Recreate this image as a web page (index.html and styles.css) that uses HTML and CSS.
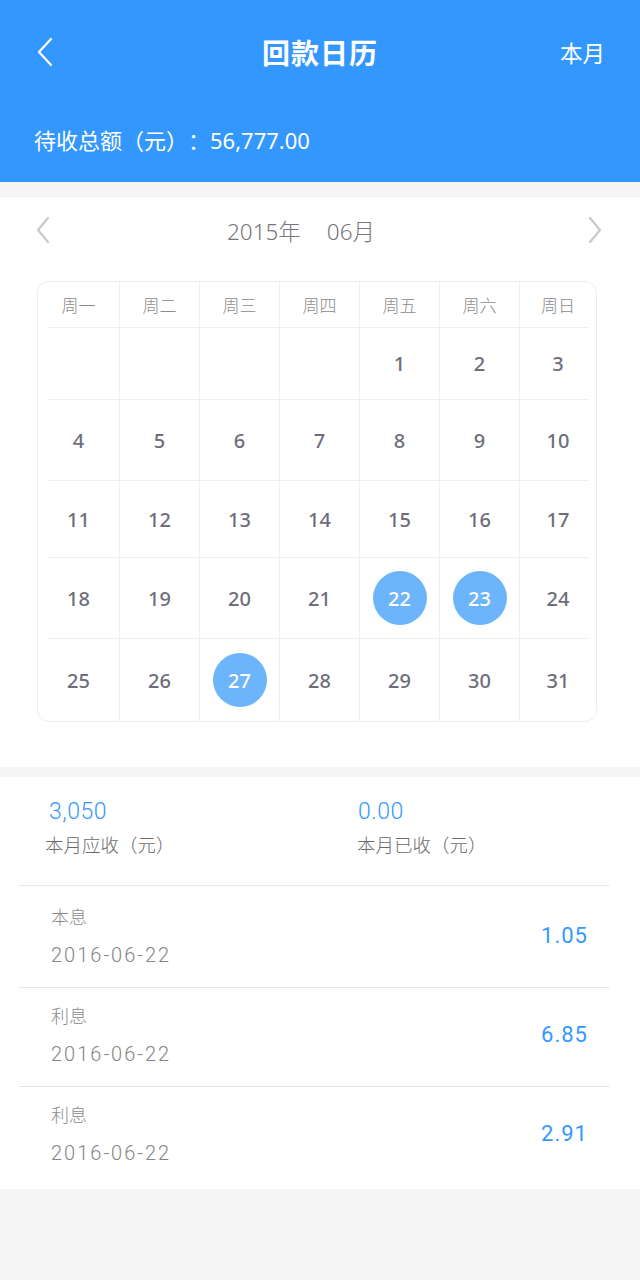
FILE: index.html
```html
<!DOCTYPE html>
<html lang="zh-CN">
<head>
<meta charset="utf-8">
<title>回款日历</title>
<link rel="stylesheet" href="styles.css">
</head>
<body>
<header class="header">
  <div class="topbar">
    <span class="back">
      <svg width="18" height="30" viewBox="0 0 18 30"><path d="M15 2 L3 15 L15 28" fill="none" stroke="#fff" stroke-width="2.2" stroke-linecap="round" stroke-linejoin="round"/></svg>
    </span>
    <h1 class="title">回款日历</h1>
    <span class="this-month">本月</span>
  </div>
  <div class="total">待收总额（元）：56,777.00</div>
</header>

<section class="calendar">
  <div class="month-nav">
    <svg class="arrow" width="18" height="30" viewBox="0 0 18 30"><path d="M14 3 L4 15 L14 27" fill="none" stroke="#c8c8c8" stroke-width="2.2" stroke-linecap="round" stroke-linejoin="round"/></svg>
    <div class="month-label"><span>2015年</span><span>06月</span></div>
    <svg class="arrow" width="18" height="30" viewBox="0 0 18 30"><path d="M4 3 L14 15 L4 27" fill="none" stroke="#c8c8c8" stroke-width="2.2" stroke-linecap="round" stroke-linejoin="round"/></svg>
  </div>

  <div class="grid-box">
    <div class="row head">
      <div class="cell">周一</div><div class="cell">周二</div><div class="cell">周三</div><div class="cell">周四</div><div class="cell">周五</div><div class="cell">周六</div><div class="cell">周日</div>
    </div>
    <div class="row r1">
      <div class="cell"></div><div class="cell"></div><div class="cell"></div><div class="cell"></div><div class="cell">1</div><div class="cell">2</div><div class="cell">3</div>
    </div>
    <div class="row r2">
      <div class="cell">4</div><div class="cell">5</div><div class="cell">6</div><div class="cell">7</div><div class="cell">8</div><div class="cell">9</div><div class="cell">10</div>
    </div>
    <div class="row r3">
      <div class="cell">11</div><div class="cell">12</div><div class="cell">13</div><div class="cell">14</div><div class="cell">15</div><div class="cell">16</div><div class="cell">17</div>
    </div>
    <div class="row r4">
      <div class="cell">18</div><div class="cell">19</div><div class="cell">20</div><div class="cell">21</div><div class="cell"><span class="mark">22</span></div><div class="cell"><span class="mark">23</span></div><div class="cell">24</div>
    </div>
    <div class="row r5">
      <div class="cell">25</div><div class="cell">26</div><div class="cell"><span class="mark">27</span></div><div class="cell">28</div><div class="cell">29</div><div class="cell">30</div><div class="cell">31</div>
    </div>
  </div>
</section>

<section class="details">
  <div class="summary">
    <div class="sum-col">
      <div class="sum-num">3,050</div>
      <div class="sum-label">本月应收（元）</div>
    </div>
    <div class="sum-col">
      <div class="sum-num">0.00</div>
      <div class="sum-label">本月已收（元）</div>
    </div>
  </div>
  <ul class="list">
    <li class="item first">
      <div class="item-left"><div class="item-type">本息</div><div class="item-date">2016-06-22</div></div>
      <div class="item-amount">1.05</div>
    </li>
    <li class="item">
      <div class="item-left"><div class="item-type">利息</div><div class="item-date">2016-06-22</div></div>
      <div class="item-amount">6.85</div>
    </li>
    <li class="item last">
      <div class="item-left"><div class="item-type">利息</div><div class="item-date">2016-06-22</div></div>
      <div class="item-amount">2.91</div>
    </li>
  </ul>
</section>
</body>
</html>
```

FILE: styles.css
```css
* { box-sizing: border-box; }

body {
  margin: 0;
  background: #f5f5f5;
  font-family: "Noto Sans", "Noto Sans CJK SC", sans-serif;
  text-spacing-trim: space-all;
}

.header {
  background: #3397fe;
  color: #fff;
  height: 182px;
}

.topbar {
  height: 106px;
  display: grid;
  grid-template-columns: 1fr auto 1fr;
  align-items: center;
  padding: 0 36px 2px 36px;
}

.back { display: flex; align-items: center; }

.title {
  margin: 0;
  font-family: "Noto Sans CJK SC", sans-serif;
  font-size: 28px;
  font-weight: 700;
  letter-spacing: 1px;
}

.this-month {
  justify-self: end;
  font-family: "Noto Sans CJK SC", sans-serif;
  font-size: 22.5px;
  margin-right: -1px;
}

.total {
  height: 76px;
  display: flex;
  align-items: center;
  padding: 0 0 10px 34px;
  font-family: "Noto Sans", "Noto Sans CJK SC", sans-serif;
  font-size: 22px;
}

.calendar {
  background: #fff;
  margin-top: 14px;
  border-top: 1px solid #ebebeb;
  padding-bottom: 45px;
}

.month-nav {
  height: 70px;
  display: flex;
  align-items: center;
  padding: 0 36px 4px 34px;
}

.month-label {
  flex: 1;
  display: flex;
  justify-content: center;
  gap: 26px;
  padding-right: 36px;
  font-family: "Noto Sans", "Noto Sans CJK SC", sans-serif;
  font-size: 22.5px;
  font-weight: 300;
  color: #76767c;
}

.grid-box {
  margin: 14px 0 0 37px;
  width: 560px;
  border: 1px solid #ececec;
  border-radius: 12px;
}

.row {
  display: grid;
  grid-template-columns: 81px repeat(5, 80px) 77px;
  background: linear-gradient(#eeeeee, #eeeeee) 9px 0 / calc(100% - 17px) 1px no-repeat;
}

.row.head { background: none; height: 45px; }
.row.r1 { height: 72px; }
.row.r2 { height: 81px; }
.row.r3 { height: 77px; }
.row.r4 { height: 81px; }
.row.r5 { height: 83px; }

.cell {
  display: flex;
  align-items: center;
  justify-content: center;
  border-left: 1px solid #eeeeee;
  font-size: 20px;
  font-weight: 500;
  color: #6e6e7b;
  padding-top: 1px;
}

.cell:first-child { border-left: none; }

.row.head .cell {
  font-family: "Noto Sans CJK SC", sans-serif;
  font-size: 17px;
  font-weight: 300;
  color: #8a8a8a;
  padding-top: 0;
}

.mark {
  width: 54px;
  height: 54px;
  border-radius: 50%;
  background: #6cb4fc;
  color: #fff;
  display: flex;
  align-items: center;
  justify-content: center;
}

.details {
  background: #fff;
  margin-top: 10px;
}

.summary {
  display: grid;
  grid-template-columns: 312px 1fr;
  padding: 20px 0 26px 45px;
}

.sum-num {
  font-family: Roboto, sans-serif;
  font-size: 23px;
  font-weight: 300;
  line-height: 30px;
  color: #3399ff;
  padding-left: 4px;
  letter-spacing: 0.5px;
}

.sum-col + .sum-col .sum-num { padding-left: 1px; }

.sum-label {
  margin-top: 2px;
  font-family: "Noto Sans CJK SC", sans-serif;
  font-size: 18.5px;
  line-height: 30px;
  color: #6a6a6a;
  font-weight: 300;
}

.list {
  list-style: none;
  margin: 0 30px 0 19px;
  padding: 0;
}

.item {
  border-top: 1px solid #e6e6e6;
  display: flex;
  align-items: center;
  justify-content: space-between;
  padding: 12px 22px 17px 32px;
}

.item.first { padding-top: 15px; }
.item.last { padding-bottom: 21px; }

.item-type {
  font-family: "Noto Sans CJK SC", sans-serif;
  font-size: 18px;
  line-height: 30px;
  color: #8a8a8a;
  font-weight: 300;
}

.item-date {
  margin-top: 9px;
  font-family: Roboto, sans-serif;
  font-size: 20px;
  font-weight: 300;
  line-height: 30px;
  color: #858585;
  letter-spacing: 2px;
}

.item-amount {
  font-family: Roboto, sans-serif;
  font-size: 22px;
  color: #3399ff;
  letter-spacing: 1px;
}
```
